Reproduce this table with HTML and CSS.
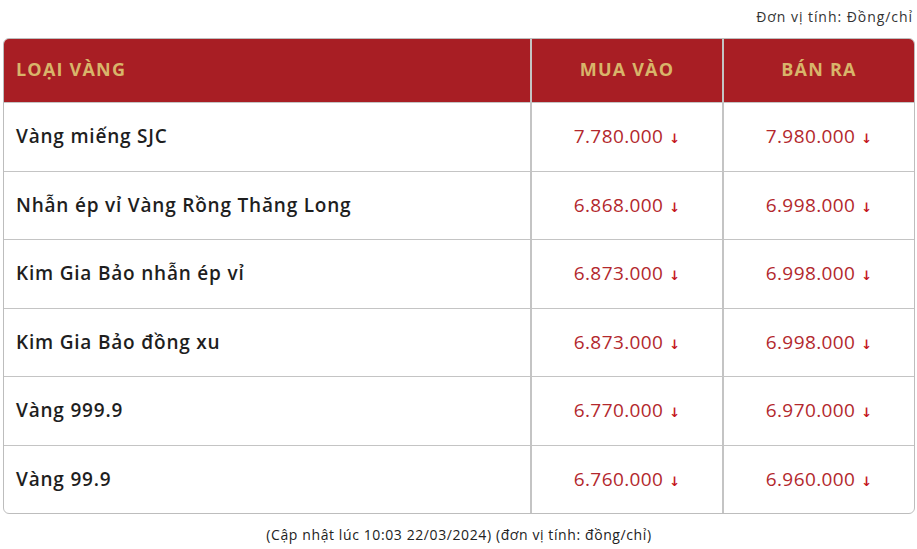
FILE: index.html
```html
<!DOCTYPE html>
<html lang="vi">
<head>
<meta charset="utf-8">
<link rel="stylesheet" href="styles.css">
</head>
<body>
<div class="page">
  <div class="unit">Đơn vị tính: Đồng/chỉ</div>
  <table class="gold">
    <thead>
      <tr><th class="name">LOẠI VÀNG</th><th>MUA VÀO</th><th>BÁN RA</th></tr>
    </thead>
    <tbody>
      <tr><td class="name">Vàng miếng SJC</td><td><span class="price">7.780.000</span><span class="down">↓</span></td><td><span class="price">7.980.000</span><span class="down">↓</span></td></tr>
      <tr><td class="name">Nhẫn ép vỉ Vàng Rồng Thăng Long</td><td><span class="price">6.868.000</span><span class="down">↓</span></td><td><span class="price">6.998.000</span><span class="down">↓</span></td></tr>
      <tr><td class="name">Kim Gia Bảo nhẫn ép vỉ</td><td><span class="price">6.873.000</span><span class="down">↓</span></td><td><span class="price">6.998.000</span><span class="down">↓</span></td></tr>
      <tr><td class="name">Kim Gia Bảo đồng xu</td><td><span class="price">6.873.000</span><span class="down">↓</span></td><td><span class="price">6.998.000</span><span class="down">↓</span></td></tr>
      <tr><td class="name">Vàng 999.9</td><td><span class="price">6.770.000</span><span class="down">↓</span></td><td><span class="price">6.970.000</span><span class="down">↓</span></td></tr>
      <tr><td class="name">Vàng 99.9</td><td><span class="price">6.760.000</span><span class="down">↓</span></td><td><span class="price">6.960.000</span><span class="down">↓</span></td></tr>
    </tbody>
  </table>
  <div class="note">(Cập nhật lúc 10:03 22/03/2024) (đơn vị tính: đồng/chỉ)</div>
</div>
</body>
</html>
```
FILE: styles.css
```css
html, body {
  margin: 0;
  padding: 0;
  background: #fff;
}
body {
  font-family: "Open Sans", "DejaVu Sans", sans-serif;
  color: #222;
}
.page {
  width: 917px;
  padding: 0 2px 0 3px;
  box-sizing: border-box;
}
.unit {
  height: 38px;
  box-sizing: border-box;
  padding-top: 7px;
  text-align: right;
  font-size: 14px;
  color: #333;
  padding-right: 2px;
  letter-spacing: 0.95px;
}
.gold {
  width: 912px;
  border-collapse: separate;
  border-spacing: 0;
  border: 1px solid #bdbdbd;
  border-radius: 6px;
  overflow: hidden;
  table-layout: fixed;
}
.gold th {
  box-sizing: border-box;
  background: #a81e24;
  color: #d8b56a;
  font-weight: 700;
  font-size: 18px;
  height: 63px;
  text-align: center;
  border-left: 2px solid #c4c4c4;
  padding: 0 0 3px 0;
  letter-spacing: 1.2px;
}
.gold th.name {
  text-align: left;
  padding-left: 12px;
  border-left: none;
  width: 526px;
}
.gold td {
  box-sizing: border-box;
  height: 68.5px;
  padding: 0 0 1px 0;
  border-top: 1px solid #c4c4c4;
  border-left: 2px solid #c4c4c4;
  text-align: center;
  font-size: 19px;
}
.gold td.name {
  border-left: none;
  text-align: left;
  padding-left: 12px;
  font-weight: 600;
  color: #1e1e1e;
  letter-spacing: 0.8px;
}
.price {
  color: #b3282d;
  font-weight: 400;
  letter-spacing: 0.4px;
}
.down {
  color: #c4161c;
  font-size: 13px;
  font-weight: 700;
  margin-left: 6px;
}
.note {
  text-align: center;
  font-size: 14px;
  color: #222;
  padding-top: 11px;
  letter-spacing: 0.6px;
}
```
